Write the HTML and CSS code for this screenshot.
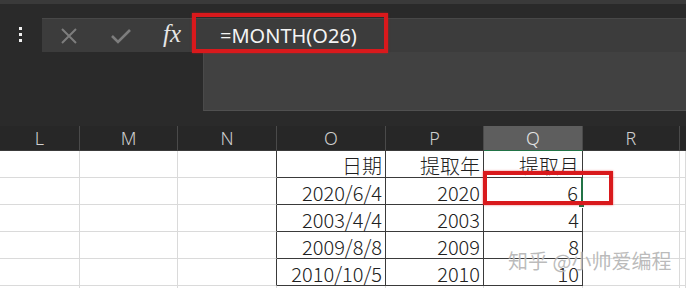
FILE: index.html
```html
<!DOCTYPE html>
<html>
<head>
<meta charset="utf-8">
<title>MONTH</title>
<link rel="stylesheet" href="styles.css">
</head>
<body>
<div class="topline"></div>

<div class="fbar">
  <div class="grip"><span></span><span></span><span></span></div>
  <div class="tools">
    <svg class="ico" width="18" height="16" viewBox="0 0 18 16"><path d="M2 1 L16 15 M16 1 L2 15" stroke="#7d7d7d" stroke-width="2" fill="none"/></svg>
    <svg class="ico" width="20" height="16" viewBox="0 0 20 16"><path d="M1 8 L7 14 L19 2" stroke="#7d7d7d" stroke-width="2.6" fill="none"/></svg>
    <span class="fx">fx</span>
  </div>
  <div class="formula">
    <span class="ftext">=MONTH(O26)</span>
    <div class="mark mark-formula"></div>
  </div>
</div>
<div class="fexpand"></div>

<div class="sheet">
  <div class="hd">L</div><div class="hd">M</div><div class="hd">N</div><div class="hd">O</div><div class="hd">P</div><div class="hd sel">Q</div><div class="hd">R</div><div class="hd end"></div>

  <div class="c"></div><div class="c"></div><div class="c edge"></div><div class="c t">日期</div><div class="c t">提取年</div><div class="c t">提取月</div><div class="c"></div><div class="c"></div>

  <div class="c"></div><div class="c"></div><div class="c edge"></div><div class="c t">2020/6/4</div><div class="c t">2020</div><div class="c t active">6</div><div class="c"></div><div class="c"></div>

  <div class="c"></div><div class="c"></div><div class="c edge"></div><div class="c t">2003/4/4</div><div class="c t">2003</div><div class="c t">4</div><div class="c"></div><div class="c"></div>

  <div class="c"></div><div class="c"></div><div class="c edge"></div><div class="c t">2009/8/8</div><div class="c t">2009</div><div class="c t">8</div><div class="c"></div><div class="c"></div>

  <div class="c"></div><div class="c"></div><div class="c edge"></div><div class="c t">2010/10/5</div><div class="c t">2010</div><div class="c t">10</div><div class="c"></div><div class="c"></div>

  <div class="c"></div><div class="c"></div><div class="c"></div><div class="c"></div><div class="c"></div><div class="c"></div><div class="c"></div><div class="c"></div>

  <div class="mark mark-cell"></div>
  <div class="wm">知乎 @小帅爱编程</div>
</div>
</body>
</html>
```

FILE: styles.css
```css
/* Spreadsheet formula bar + grid */

body
{ margin: 0;
width: 686px;
height: 288px;
overflow: hidden;
background-color: #2a2a2a;
font-family: "Noto Sans", "Noto Sans CJK SC", sans-serif;
}

div.topline
{ height: 4px;
background-color: #3a3a3a;
}

div.fbar
{ display: flex;
height: 34px;
margin-top: 14px;
}

div.grip
{ width: 42px;
display: flex;
flex-direction: column;
align-items: center;
padding-top: 9px;
gap: 3px;
box-sizing: border-box;
padding-right: 2px;
}

div.grip span
{ width: 3px;
height: 3px;
background-color: #f0f0f0;
}

div.tools
{ width: 150px;
display: flex;
align-items: center;
background-color: #3c3c3c;
border-top: 1px solid #484848;
box-sizing: border-box;
}

svg.ico
{ margin-left: 18px;
margin-right: 15px;
}

span.fx
{ font-family: "Liberation Serif", serif;
font-style: italic;
font-size: 25px;
color: #e6e6e6;
margin-left: 17px;
margin-top: -4px;
}

div.formula
{ flex: 1;
position: relative;
background-color: #3c3c3c;
border-top: 1px solid #484848;
display: flex;
align-items: center;
padding-left: 28px;
}

span.ftext
{ color: #f4f4f4;
font-size: 20px;
margin-top: -1px;
}

div.fexpand
{ margin-left: 203px;
height: 58px;
background-color: #414141;
border-left: 1px solid #4a4a4a;
border-bottom: 1px solid #505050;
}

/* red highlight boxes */

div.mark
{ position: absolute;
border: 4px solid #d9191c;
box-sizing: border-box;
box-shadow: 0 0 2px rgba(217, 25, 28, 0.6);
}

div.mark-formula
{ left: 0;
top: -6px;
width: 196px;
height: 40px;
}

div.mark-cell
{ left: 483px;
top: 45px;
width: 130px;
height: 34px;
}

/* grid */

div.sheet
{ position: relative;
margin-top: 15px;
display: grid;
grid-template-columns: 80px 98px 99px 109px 98px 99px 97px 6px;
grid-template-rows: 25px repeat(5, 27px) 2px;
background-color: #ffffff;
}

div.hd
{ background-color: #272727;
color: #cfcfcf;
font-size: 18px;
font-weight: 300;
text-align: center;
line-height: 24px;
border-right: 1px solid #4a4a4a;
border-bottom: 1px solid #3a3a3a;
}

div.hd.sel
{ background-color: #5e5e5e;
color: #e4e4e4;
border-bottom: 1px solid #217346;
}

div.hd.end
{ border-right: none;
}

div.c
{ border-right: 1px solid #dadada;
border-bottom: 1px solid #dadada;
font-family: "Noto Sans CJK SC", sans-serif;
font-weight: 300;
font-size: 20px;
color: #202020;
text-align: right;
padding-right: 3px;
line-height: 30px;
height: 26px;
white-space: nowrap;
}

div.c.edge
{ border-right: 1px solid #3a3a3a;
}

div.c.t
{ border-right: 1px solid #3a3a3a;
border-bottom: 1px solid #3a3a3a;
}

div.c.active
{ border-right: 2px solid #217346;
position: relative;
}

div.c.active::after
{ content: "";
position: absolute;
right: -4px;
bottom: -4px;
width: 5px;
height: 5px;
background-color: #217346;
border: 1px solid #ffffff;
}

div.wm
{ position: absolute;
left: 508px;
top: 120px;
font-family: "Noto Sans CJK SC", sans-serif;
font-size: 20px;
color: rgba(120, 120, 120, 0.5);
text-shadow: 0 0 1px #ffffff;
}
```
